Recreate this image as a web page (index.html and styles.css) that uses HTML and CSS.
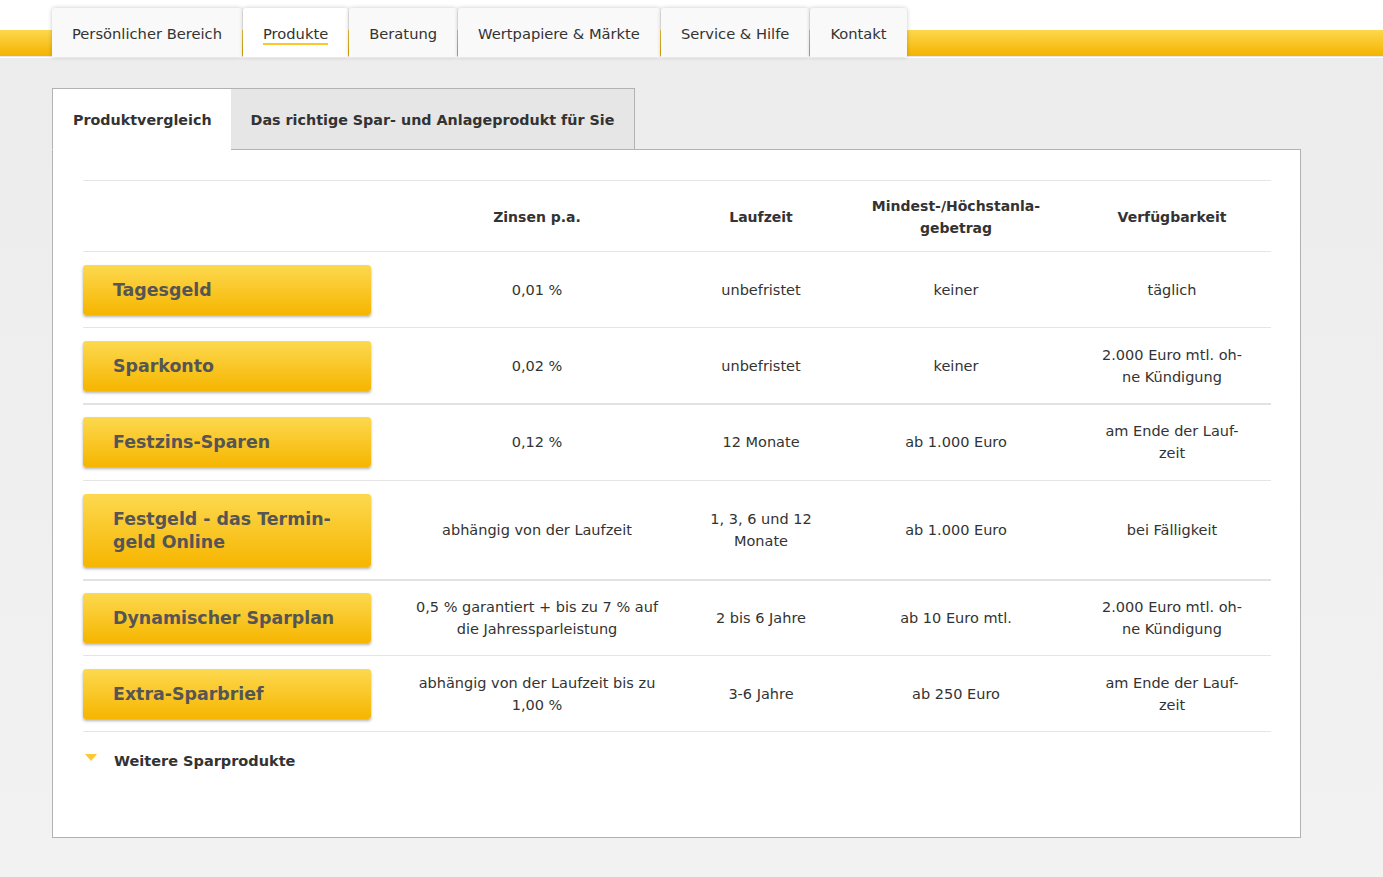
FILE: index.html
```html
<!DOCTYPE html>
<html lang="de">
<head>
<meta charset="utf-8">
<title>Produktvergleich</title>
<link rel="stylesheet" href="styles.css">
</head>
<body>
<header class="top">
  <div class="bar"></div>
  <nav class="mainnav">
    <a class="navtab">Persönlicher Bereich</a>
    <a class="navtab active"><span class="ul">Produkte</span></a>
    <a class="navtab">Beratung</a>
    <a class="navtab">Wertpapiere &amp; Märkte</a>
    <a class="navtab">Service &amp; Hilfe</a>
    <a class="navtab">Kontakt</a>
  </nav>
</header>
<main class="content">
  <div class="subtabs">
    <div class="subtab active">Produktvergleich</div>
    <div class="subtab">Das richtige Spar- und Anlageprodukt für Sie</div>
  </div>
  <section class="panel">
    <table class="cmp">
      <colgroup>
        <col class="c1"><col class="c2"><col class="c3"><col class="c4"><col class="c5">
      </colgroup>
      <thead>
        <tr>
          <th></th>
          <th>Zinsen p.a.</th>
          <th>Laufzeit</th>
          <th>Mindest-/Höchstanla-<br>gebetrag</th>
          <th>Verfügbarkeit</th>
        </tr>
      </thead>
      <tbody>
        <tr>
          <td class="btncell"><a class="pbtn">Tagesgeld</a></td>
          <td>0,01 %</td>
          <td>unbefristet</td>
          <td>keiner</td>
          <td>täglich</td>
        </tr>
        <tr class="thick">
          <td class="btncell"><a class="pbtn">Sparkonto</a></td>
          <td>0,02 %</td>
          <td>unbefristet</td>
          <td>keiner</td>
          <td>2.000 Euro mtl. oh-<br>ne Kündigung</td>
        </tr>
        <tr>
          <td class="btncell"><a class="pbtn">Festzins-Sparen</a></td>
          <td>0,12 %</td>
          <td>12 Monate</td>
          <td>ab 1.000 Euro</td>
          <td>am Ende der Lauf-<br>zeit</td>
        </tr>
        <tr class="thick">
          <td class="btncell"><a class="pbtn">Festgeld - das Termin-<br>geld Online</a></td>
          <td>abhängig von der Laufzeit</td>
          <td>1, 3, 6 und 12<br>Monate</td>
          <td>ab 1.000 Euro</td>
          <td>bei Fälligkeit</td>
        </tr>
        <tr>
          <td class="btncell"><a class="pbtn">Dynamischer Sparplan</a></td>
          <td>0,5 % garantiert + bis zu 7 % auf<br>die Jahressparleistung</td>
          <td>2 bis 6 Jahre</td>
          <td>ab 10 Euro mtl.</td>
          <td>2.000 Euro mtl. oh-<br>ne Kündigung</td>
        </tr>
        <tr>
          <td class="btncell"><a class="pbtn">Extra-Sparbrief</a></td>
          <td>abhängig von der Laufzeit bis zu<br>1,00 %</td>
          <td>3-6 Jahre</td>
          <td>ab 250 Euro</td>
          <td>am Ende der Lauf-<br>zeit</td>
        </tr>
      </tbody>
    </table>
    <div class="more">
      <svg class="tri" width="12" height="8" viewBox="0 0 12 8" aria-hidden="true"><polygon points="0,0 12,0 6,7" fill="#fcc935"/></svg>
      <span>Weitere Sparprodukte</span>
    </div>
  </section>
</main>
</body>
</html>
```

FILE: styles.css
```css
* { box-sizing: border-box; }
html, body { margin: 0; padding: 0; }
body {
  font-family: "DejaVu Sans", Verdana, sans-serif;
  color: #333;
  background: linear-gradient(#ececec, #f2f2f2) no-repeat;
  background-color: #f2f2f2;
  min-height: 877px;
}
.top {
  position: relative;
  height: 58px;
  background: #fff;
}
.bar {
  position: absolute;
  left: 0; right: 0; top: 30px; height: 27px;
  background: linear-gradient(#fdd84c, #f4b300);
  border-bottom: 1px solid #e8e8e8;
}
.mainnav {
  position: relative;
  display: flex;
  gap: 1px;
  padding: 8px 0 0 52px;
}
.navtab {
  display: block;
  height: 49px;
  padding: 0 20px;
  line-height: 51px;
  font-size: 14.7px;
  color: #333;
  background: #f9f9f9;
  border-radius: 3px 3px 0 0;
  box-shadow: 0 0 4px rgba(0,0,0,0.22);
  white-space: nowrap;
}
.navtab.active { background: #fff; }
.navtab .ul {
  border-bottom: 2px solid #fcc72a;
  padding-bottom: 1px;
}
.content {
  width: 1249px;
  margin: 30px 0 0 52px;
}
.subtabs {
  display: flex;
  height: 62px;
  position: relative;
  z-index: 1;
  margin-bottom: -1px;
}
.subtab {
  padding: 0 20px;
  line-height: 62px;
  font-size: 14.3px;
  font-weight: bold;
  color: #333;
  background: #e6e6e6;
  border: 1px solid #b2b2b2;
  border-left: none;
  white-space: nowrap;
}
.subtab.active {
  background: #fff;
  border-left: 1px solid #b2b2b2;
  border-right: none;
  border-bottom: 1px solid #fff;
  padding-right: 19px;
}
.panel {
  background: #fff;
  border: 1px solid #b2b2b2;
  padding: 30px 29px 0 30px;
  height: 689px;
}
.cmp {
  width: 1188px;
  border-collapse: collapse;
  table-layout: fixed;
  border-top: 1px solid #e5e5e5;
}
.c1 { width: 308px; }
.c2 { width: 292px; }
.c3 { width: 156px; }
.c4 { width: 234px; }
.c5 { width: 198px; }
.cmp th {
  font-size: 14px;
  font-weight: bold;
  line-height: 22px;
  padding: 14px 0 12px;
  text-align: center;
  border-bottom: 1px solid #e5e5e5;
  height: 71px;
}
.cmp td {
  font-size: 14.5px;
  line-height: 22px;
  text-align: center;
  padding: 12px 0;
  border-bottom: 1px solid #e5e5e5;
  height: 76px;
}
.cmp tr.thick td { border-bottom: 2px solid #e2e2e2; }
.cmp td.btncell {
  text-align: left;
  padding: 12px 0 12px;
}
.cmp tr.thick td.btncell { padding: 13px 0 12px; }
.pbtn {
  display: block;
  width: 288px;
  padding: 14px 10px 13px 30px;
  font-size: 17.4px;
  line-height: 23px;
  font-weight: bold;
  color: #555;
  background: linear-gradient(#fdd94f, #f6b500);
  border-radius: 3px;
  box-shadow: 0 2px 3px rgba(0,0,0,0.3);
}
.more {
  display: flex;
  align-items: center;
  gap: 17px;
  padding: 21px 0 0 2px;
  font-size: 14.5px;
  font-weight: bold;
}
.tri { flex: none; margin-top: -6px; }
```
